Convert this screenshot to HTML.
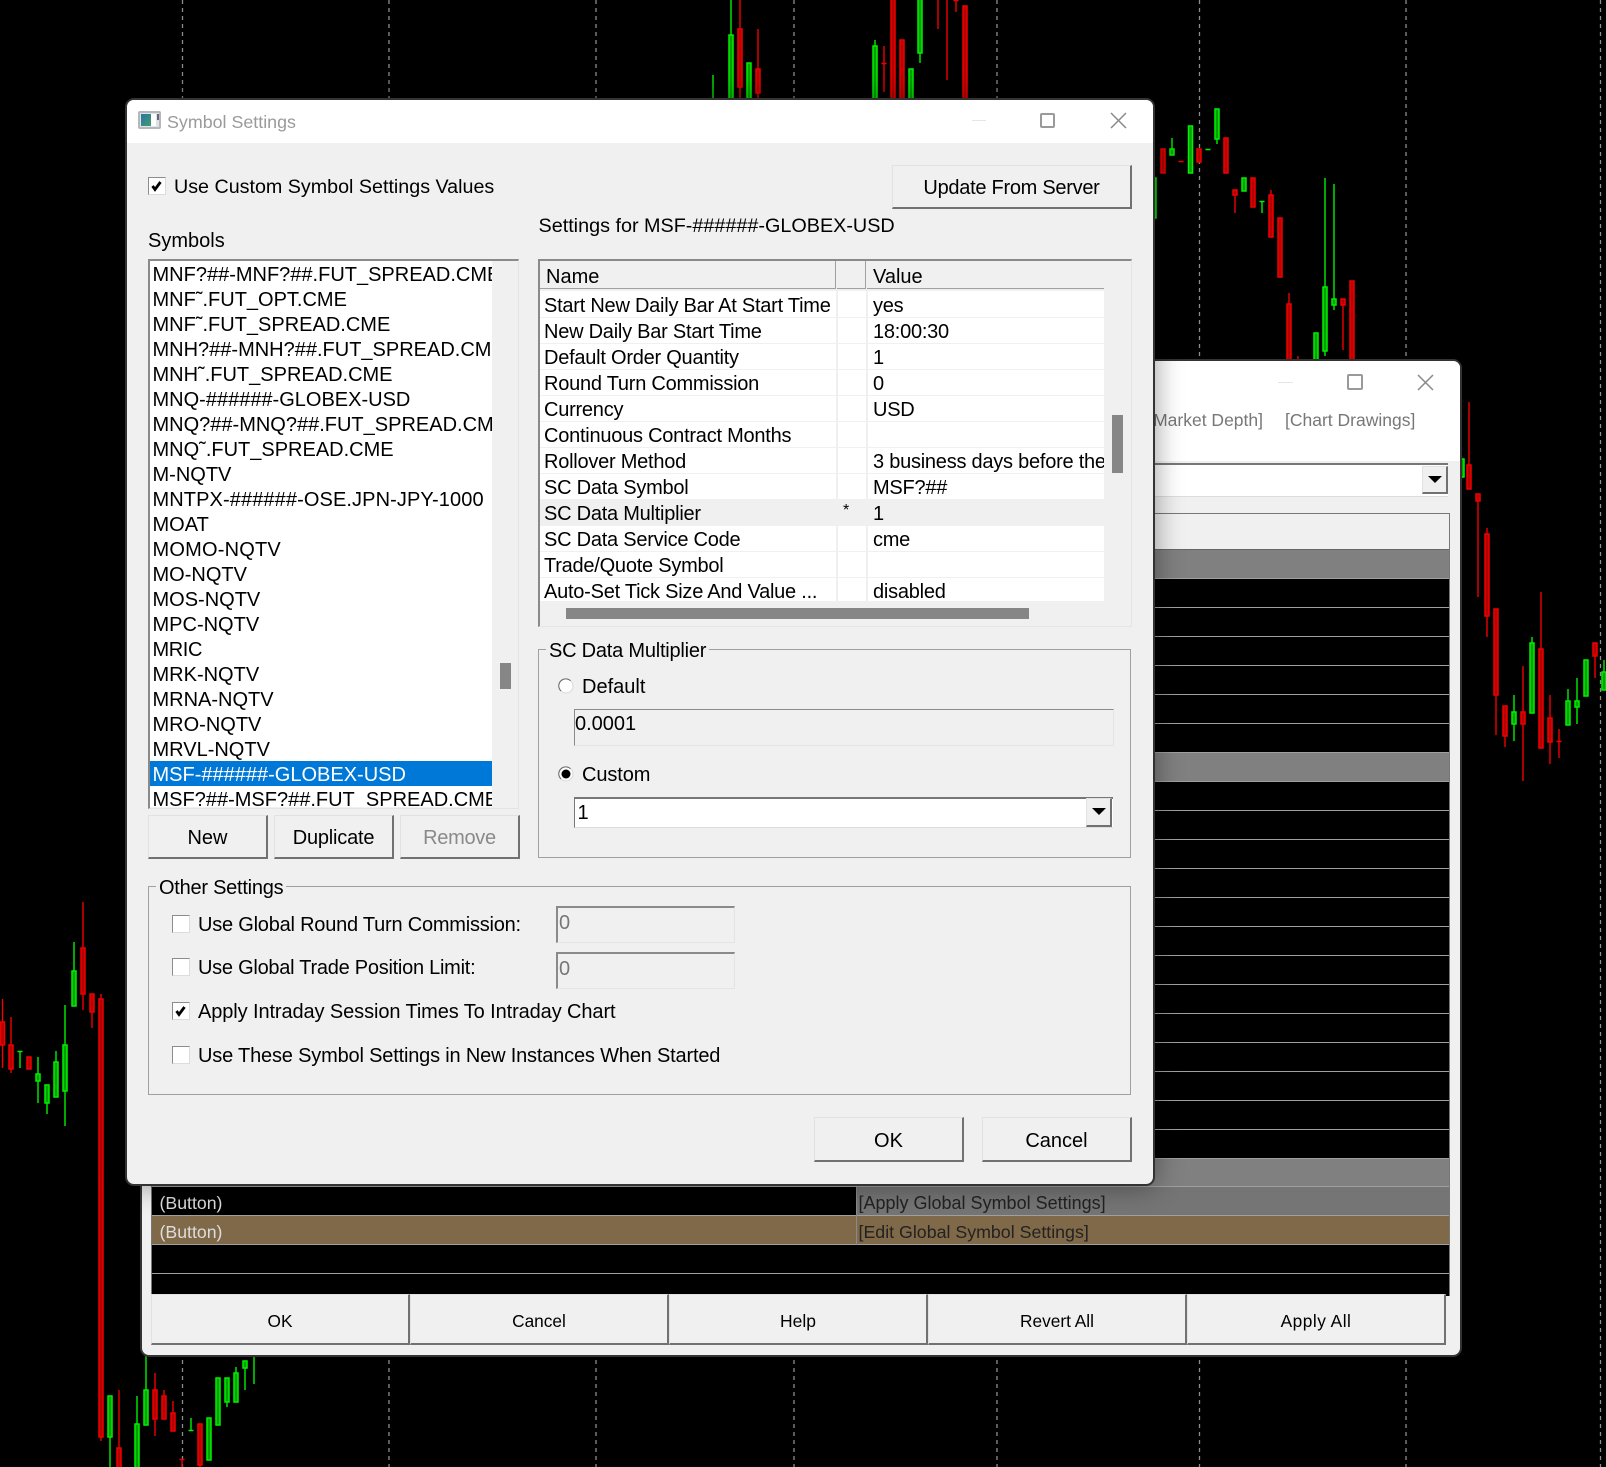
<!DOCTYPE html>
<html><head><meta charset="utf-8"><title>Symbol Settings</title>
<style>
html,body{margin:0;padding:0;background:#000}
body{position:relative;width:1606px;height:1467px;overflow:hidden;font-family:"Liberation Sans",Arial,sans-serif;font-size:20px;color:#000}
div,span,svg{position:absolute;box-sizing:border-box}
.t{white-space:nowrap;line-height:24px;height:24px}
.win{background:#f0f0f0;border:2px solid #333}
.btn{background:#f0f0f0;border-style:solid;border-width:1px 2px 2px 1px;border-color:#e2e2e2 #717171 #717171 #e2e2e2;text-align:center;white-space:nowrap}
.group{border:1px solid #a0a0a0;box-shadow:inset 0 0 0 0 #fff}
.sunken{border-style:solid;border-width:2px 1px 1px 2px;border-color:#8a8a8a #e4e4e4 #e4e4e4 #8a8a8a}
.cb{width:18px;height:18px;background:#fff;border:1px solid #dcdcdc;border-top-color:#8c8c8c;border-left-color:#8c8c8c}
.rl{position:absolute;left:0;width:100%;height:25px;line-height:25px;padding-left:2.500px;white-space:nowrap}
.tr{left:0;width:564px;height:26px;border-bottom:1px solid #f0f0f0}
.tr span{line-height:25px;white-space:nowrap;top:0}
.tr .a{left:4px}.tr .b{left:333px}
.gl{left:0;width:1298px;height:1px;background:#a0a0a0}
</style></head><body>
<svg width="1606" height="1467" style="left:0;top:0">
<g stroke="#8c8c8c" stroke-width="1.3" stroke-dasharray="4 4" fill="none">
<path d="M182.500 0V1467M389 0V1467M596 0V1467M794 0V1467M997 0V1467M1199.500 0V1467M1406 0V1467M1600.500 0V1467"/>
</g>
<path fill="none" stroke="#00f000" stroke-width="1.4" d="M1154 218V223M1172 138V149M1205.500 149.500h5M1217 139V144M1259.500 201.500h5M1262 201V213M1325 178V356M1334 184V310M713 75V100M731 0V35M875 40V46M920 53V63M1514 695V741M1532 637V643M1568 689V701M1577 678V724M1604 660V672M17.500 1051.500h5M20 1051V1068M38 1057V1103M47 1103V1114M56 1051V1062M65 1005V1126M74 942V971M110 1437V1467M137 1396V1424M146 1355V1390M188.500 1430.500h5M191 1418V1430M227 1402V1407M236 1367V1373M245 1368V1390M251.500 1355.500h5M254 1355V1384"/>
<path fill="#00a000" stroke="#00f000" stroke-width="1.500" d="M1152 178h4v40h-4zM1170 149h4v6h-4zM1188.500 126h4v47h-4zM1215 109h4v30h-4zM1242 178h4v13h-4zM1314 333h4v30h-4zM1323 287h4v64h-4zM1332 299h4v6h-4zM729 35h4v70h-4zM747 63h4v40h-4zM873 46h4v60h-4zM909 69h4v40h-4zM918 -2h4v55h-4zM1460 459h4v18h-4zM1512 712h4v12h-4zM1530 643h4v70h-4zM1566 701h4v24h-4zM1575 701h4v6h-4zM1584 660h4v36h-4zM1602 672h4v18h-4zM36 1074h4v7h-4zM45 1085h4v18h-4zM54 1062h4v35h-4zM63 1045h4v46h-4zM72 971h4v35h-4zM108 1396h4v41h-4zM135 1424h4v46h-4zM144 1390h4v35h-4zM207 1418h4v42h-4zM216 1378h4v47h-4zM225 1378h4v24h-4zM234 1373h4v29h-4zM243 1361h4v7h-4z"/>
<path fill="none" stroke="#f00000" stroke-width="1.4" d="M1178.500 161.500h5M1235 195V213M1271 190V195M1289 293V304M1298 356V362M1343 305V350M740 0V100M758 29V98M884 46V92M881.500 63.500h5M893 99V100M938 0V29M947 0V80M956 0V12M953.500 0.500h5M1469 402V465M1478 501V597M1487 528V534M1487 616V637M1496 695V735M1505 736V747M1523 666V781M1541 592V649M1550 695V764M1559 729V758M1556.500 741.500h5M1595 656V678M2.500 999V1068M11 1017V1073M83 902V1010M92 1012V1028M101 994V1441M119 1390V1448M155 1373V1436M164 1390V1396M173 1401V1413M179.500 1459.500h5M182 1459V1467M200 1465V1467"/>
<path fill="#b40000" stroke="#f00000" stroke-width="1.500" d="M1161 149h4v24h-4zM1197 149h4v13h-4zM1224 138h4v35h-4zM1233 190h4v5h-4zM1251 178h4v29h-4zM1269 195h4v42h-4zM1278 218h4v59h-4zM1287 304h4v60h-4zM1341 299h4v6h-4zM1350 281h4v83h-4zM738 29h4v58h-4zM756 69h4v24h-4zM891 -2h4v101h-4zM900 40h4v65h-4zM963 6h4v99h-4zM1467 465h4v24h-4zM1476 494h4v7h-4zM1485 534h4v82h-4zM1494 609h4v86h-4zM1503 706h4v30h-4zM1521 712h4v12h-4zM1539 649h4v99h-4zM1548 718h4v24h-4zM1593 643h4v13h-4zM0.500 1022h4v23h-4zM9 1045h4v24h-4zM27 1057h4v12h-4zM81 948h4v46h-4zM90 994h4v18h-4zM99 999h4v438h-4zM117 1448h4v22h-4zM153 1390h4v29h-4zM162 1396h4v23h-4zM171 1413h4v18h-4zM198 1424h4v41h-4z"/>
</svg>

<!-- BACK WINDOW -->
<div class="win" style="left:140px;top:359px;width:1322px;height:998px;border-radius:9px;overflow:hidden">
  <div style="left:0;top:0;width:1318px;height:100px;background:#fff"></div>
  <span class="t" style="right:197px;top:47px;font-size:17.500px;color:#777">[Market Depth]</span>
  <span class="t" style="left:1143px;top:47px;font-size:17.500px;color:#777">[Chart Drawings]</span>
  <div style="left:1136px;top:20.500px;width:15px;height:1px;background:#e4e4e4"></div>
  <div style="left:1205px;top:13px;width:16px;height:16px;border:2px solid #9a9a9a;border-radius:2px"></div>
  <svg width="17" height="17" style="left:1275px;top:13px"><path d="M1 1L16 16M16 1L1 16" stroke="#8a8a8a" stroke-width="1.500" fill="none"/></svg>
  <!-- combo -->
  <div style="left:10px;top:102px;width:1296px;height:34px;background:#fff;border-top:2px solid #777;border-bottom:1px solid #ddd"></div>
  <div class="btn" style="left:1280px;top:105px;width:26px;height:28px"></div>
  <svg width="14" height="8" style="left:1286px;top:115px"><path d="M0 0H14L7 7Z" fill="#000"/></svg>
  <!-- grid -->
  <div style="left:8.500px;top:152px;width:1299px;height:783px;background:#000;border:1px solid #777;border-bottom:0;overflow:hidden">
    <div style="left:0;top:0;width:1298px;height:35px;background:#f0f0f0"></div>
    <div style="left:0;top:35px;width:1298px;height:30px;background:#808080;border-top:1px solid #666"></div>
    <div style="left:0;top:238px;width:1298px;height:29px;background:#808080"></div>
    <div style="left:0;top:644px;width:1298px;height:29px;background:#808080"></div>
    <div class="gl" style="top:64px"></div><div class="gl" style="top:93px"></div><div class="gl" style="top:122px"></div><div class="gl" style="top:151px"></div><div class="gl" style="top:180px"></div><div class="gl" style="top:209px"></div><div class="gl" style="top:238px"></div><div class="gl" style="top:267px"></div><div class="gl" style="top:296px"></div><div class="gl" style="top:325px"></div><div class="gl" style="top:354px"></div><div class="gl" style="top:383px"></div><div class="gl" style="top:412px"></div><div class="gl" style="top:441px"></div><div class="gl" style="top:470px"></div><div class="gl" style="top:499px"></div><div class="gl" style="top:528px"></div><div class="gl" style="top:557px"></div><div class="gl" style="top:586px"></div><div class="gl" style="top:615px"></div><div class="gl" style="top:644px"></div>
    <div style="left:704px;top:673px;width:594px;height:29px;background:#757575"></div>
    <div style="left:0;top:702px;width:1298px;height:29px;background:#7f6948"></div>
    <div class="gl" style="top:672px"></div><div class="gl" style="top:701px"></div><div class="gl" style="top:730px"></div><div class="gl" style="top:759px"></div>
    <div style="left:704px;top:673px;width:1.500px;height:58px;background:#8a8a8a"></div>
    <span class="t" style="left:8px;top:677px;font-size:17.700px;color:#ddd">(Button)</span>
    <span class="t" style="left:8px;top:706px;font-size:17.700px;color:#ddd">(Button)</span>
    <span class="t" style="left:707px;top:677px;font-size:18px;color:#222">[Apply Global Symbol Settings]</span>
    <span class="t" style="left:707px;top:706px;font-size:17.800px;color:#222">[Edit Global Symbol Settings]</span>
  </div>
  <!-- bottom buttons -->
  <div class="btn" style="left:9px;top:933px;width:259px;height:51px;font-size:17.300px;line-height:52px">OK</div>
  <div class="btn" style="left:268px;top:933px;width:259px;height:51px;font-size:17.300px;line-height:52px">Cancel</div>
  <div class="btn" style="left:527px;top:933px;width:259px;height:51px;font-size:17.500px;line-height:52px">Help</div>
  <div class="btn" style="left:786px;top:933px;width:259px;height:51px;font-size:17.300px;line-height:52px">Revert All</div>
  <div class="btn" style="left:1045px;top:933px;width:259px;height:51px;font-size:17.300px;line-height:52px;letter-spacing:.5px">Apply All</div>
</div>

<!-- MAIN DIALOG -->
<div class="win" style="left:125px;top:98px;width:1030px;height:1088px;border-radius:9px;overflow:hidden;z-index:1"></div>
<div style="left:125px;top:98px;width:1030px;height:1088px;border-radius:9px;box-shadow:0 0 28px rgba(0,0,0,.4);z-index:0"></div>
<div style="left:127px;top:100px;width:1026px;height:43px;background:#fff;border-radius:7px 7px 0 0;z-index:1"></div>

<div style="left:0;top:0;width:1606px;height:1467px;z-index:2">
  <!-- title -->
  <div style="left:138px;top:111px;width:23px;height:18px;background:#dfe3e6;border:2px solid #b4b8bc;border-radius:2px"></div>
  <div style="left:141px;top:114px;width:10px;height:12px;background:linear-gradient(135deg,#2b76a8,#3f9d6c)"></div>
  <div style="left:151px;top:114px;width:5px;height:12px;background:#fff"></div>
  <div style="left:157px;top:114px;width:2px;height:6px;background:#667"></div>
  <span class="t" style="left:167px;top:110px;font-size:17.850px;color:#9a9a9a">Symbol Settings</span>
  <div style="left:972px;top:120px;width:14px;height:1px;background:#e6e6e6"></div>
  <div style="left:1040px;top:113px;width:15px;height:15px;border:2px solid #9a9a9a;border-radius:2px"></div>
  <svg width="17" height="17" style="left:1110px;top:112px"><path d="M1 1L16 16M16 1L1 16" stroke="#8a8a8a" stroke-width="1.500" fill="none"/></svg>

  <!-- top row -->
  <div class="cb" style="left:148px;top:177px"></div>
  <svg width="12" height="12" style="left:151px;top:180px"><path d="M1.500 6L4 9.500L9.500 2" stroke="#000" stroke-width="2.800" fill="none"/></svg>
  <span class="t" style="left:174px;top:175px;font-size:19.700px">Use Custom Symbol Settings Values</span>
  <div class="btn" style="left:892px;top:165px;width:240px;height:44px;line-height:44px;font-size:20px;letter-spacing:-.28px">Update From Server</div>
  <span class="t" style="left:538.500px;top:214px;font-size:19.800px">Settings for MSF-######-GLOBEX-USD</span>
  <span class="t" style="left:148px;top:229px">Symbols</span>

  <!-- list -->
  <div class="sunken" style="left:148px;top:259px;width:371px;height:550px"></div>
  <div style="left:150px;top:261px;width:342px;height:546px;background:#fff;overflow:hidden">
    <div class="rl" style="top:1.500px">MNF?##-MNF?##.FUT_SPREAD.CME</div>
    <div class="rl" style="top:26.500px">MNF˜.FUT_OPT.CME</div>
    <div class="rl" style="top:51.500px">MNF˜.FUT_SPREAD.CME</div>
    <div class="rl" style="top:76.500px">MNH?##-MNH?##.FUT_SPREAD.CME</div>
    <div class="rl" style="top:101.500px">MNH˜.FUT_SPREAD.CME</div>
    <div class="rl" style="top:126.500px">MNQ-######-GLOBEX-USD</div>
    <div class="rl" style="top:151.500px">MNQ?##-MNQ?##.FUT_SPREAD.CME</div>
    <div class="rl" style="top:176.500px">MNQ˜.FUT_SPREAD.CME</div>
    <div class="rl" style="top:201.500px">M-NQTV</div>
    <div class="rl" style="top:226.500px;letter-spacing:.1px">MNTPX-######-OSE.JPN-JPY-1000</div>
    <div class="rl" style="top:251.500px">MOAT</div>
    <div class="rl" style="top:276.500px;letter-spacing:.2px">MOMO-NQTV</div>
    <div class="rl" style="top:301.500px">MO-NQTV</div>
    <div class="rl" style="top:326.500px">MOS-NQTV</div>
    <div class="rl" style="top:351.500px">MPC-NQTV</div>
    <div class="rl" style="top:376.500px;letter-spacing:-.4px">MRIC</div>
    <div class="rl" style="top:401.500px">MRK-NQTV</div>
    <div class="rl" style="top:426.500px">MRNA-NQTV</div>
    <div class="rl" style="top:451.500px">MRO-NQTV</div>
    <div class="rl" style="top:476.500px">MRVL-NQTV</div>
    <div style="left:0;top:500px;width:100%;height:25px;background:#0078d7"></div>
    <div class="rl" style="top:501.500px;color:#fff">MSF-######-GLOBEX-USD</div>
    <div class="rl" style="top:526.500px">MSF?##-MSF?##.FUT_SPREAD.CME</div>
  </div>
  <div style="left:500px;top:663px;width:11px;height:26px;background:#868686"></div>

  <div class="btn" style="left:148px;top:815px;width:120px;height:44px;line-height:44px">New</div>
  <div class="btn" style="left:274px;top:815px;width:120px;height:44px;line-height:44px;letter-spacing:-.2px">Duplicate</div>
  <div class="btn" style="left:400px;top:815px;width:120px;height:44px;line-height:44px;color:#8a8a8a;letter-spacing:-.3px">Remove</div>

  <!-- table -->
  <div class="sunken" style="left:538px;top:259px;width:594px;height:368px"></div>
  <div style="left:540px;top:261px;width:296px;height:28px;border-right:1.500px solid #a0a0a0;border-bottom:1.500px solid #a0a0a0"></div>
  <div style="left:837px;top:261px;width:29px;height:28px;border-right:1.500px solid #a0a0a0;border-bottom:1.500px solid #a0a0a0"></div>
  <div style="left:867px;top:261px;width:237px;height:28px;border-bottom:1.500px solid #a0a0a0"></div>
  <span class="t" style="left:546px;top:265px">Name</span>
  <span class="t" style="left:873px;top:265px">Value</span>
  <div style="left:540px;top:291px;width:564px;height:310px;background:#fff;overflow:hidden;letter-spacing:-.24px">
    <div class="tr" style="top:1px"><span class="a" style="top:1.500px">Start New Daily Bar At Start Time</span><span class="b" style="top:1.500px">yes</span></div>
    <div class="tr" style="top:27px"><span class="a" style="top:1.500px">New Daily Bar Start Time</span><span class="b" style="top:1.500px">18:00:30</span></div>
    <div class="tr" style="top:53px"><span class="a" style="top:1.500px">Default Order Quantity</span><span class="b" style="top:1.500px">1</span></div>
    <div class="tr" style="top:79px"><span class="a" style="top:1.500px">Round Turn Commission</span><span class="b" style="top:1.500px">0</span></div>
    <div class="tr" style="top:105px"><span class="a" style="top:1.500px">Currency</span><span class="b" style="top:1.500px">USD</span></div>
    <div class="tr" style="top:131px"><span class="a" style="top:1.500px">Continuous Contract Months</span></div>
    <div class="tr" style="top:157px"><span class="a" style="top:1.500px">Rollover Method</span><span class="b" style="top:1.500px">3 business days before the expiration</span></div>
    <div class="tr" style="top:183px"><span class="a" style="top:1.500px">SC Data Symbol</span><span class="b" style="top:1.500px">MSF?##</span></div>
    <div class="tr" style="top:209px;background:#f0f0f0"><span class="a" style="top:1.500px">SC Data Multiplier</span><span style="left:303px;top:-2px;line-height:25px;font-size:16px">*</span><span class="b" style="top:1.500px">1</span></div>
    <div class="tr" style="top:235px"><span class="a" style="top:1.500px">SC Data Service Code</span><span class="b" style="top:1.500px">cme</span></div>
    <div class="tr" style="top:261px"><span class="a" style="top:1.500px">Trade/Quote Symbol</span></div>
    <div class="tr" style="top:287px"><span class="a" style="top:1.500px">Auto-Set Tick Size And Value ...</span><span class="b" style="top:1.500px">disabled</span></div>
    <div style="left:296px;top:0;width:2px;height:310px;background:#f0f0f0"></div>
    <div style="left:326px;top:0;width:2px;height:310px;background:#f0f0f0"></div>
  </div>
  <div style="left:1112px;top:415px;width:11px;height:58px;background:#868686"></div>
  <div style="left:566px;top:608px;width:463px;height:11px;background:#868686"></div>

  <!-- SC Data Multiplier -->
  <div class="group" style="left:538px;top:649px;width:593px;height:209px"></div>
  <span class="t" style="left:546px;top:639px;background:#f0f0f0;padding:0 3px;letter-spacing:-.22px">SC Data Multiplier</span>
  <svg width="16" height="16" style="left:557.500px;top:678px"><circle cx="8" cy="8" r="7" fill="#fff" stroke="#d8d8d8"/><path d="M12.500 2.700A7 7 0 0 0 3 13" fill="none" stroke="#666" stroke-width="1"/></svg>
  <span class="t" style="left:582px;top:675px">Default</span>
  <div class="sunken" style="left:574px;top:709px;width:540px;height:37px;border-width:1px"></div>
  <span class="t" style="left:575px;top:712px">0.0001</span>
  <svg width="16" height="16" style="left:557.500px;top:766px"><circle cx="8" cy="8" r="7" fill="#fff" stroke="#d8d8d8"/><path d="M12.500 2.700A7 7 0 0 0 3 13" fill="none" stroke="#666" stroke-width="1"/><circle cx="8" cy="8" r="4.500" fill="#000"/></svg>
  <span class="t" style="left:582px;top:763px;letter-spacing:-.1px">Custom</span>
  <div style="left:574px;top:797px;width:539px;height:31px;background:#fff;border-style:solid;border-width:2px 0 1px 1.500px;border-color:#777 #ddd #ddd #777"></div>
  <span class="t" style="left:577.500px;top:801px">1</span>
  <div class="btn" style="left:1086px;top:798px;width:26px;height:29px"></div>
  <svg width="14" height="8" style="left:1092px;top:808px"><path d="M0 0H14L7 7Z" fill="#000"/></svg>

  <!-- Other Settings -->
  <div class="group" style="left:148px;top:886px;width:983px;height:209px"></div>
  <span class="t" style="left:156px;top:876px;background:#f0f0f0;padding:0 3px;letter-spacing:-.25px">Other Settings</span>
  <div class="cb" style="left:172px;top:915px"></div>
  <span class="t" style="left:198px;top:913px;letter-spacing:-.22px">Use Global Round Turn Commission:</span>
  <div class="sunken" style="left:556px;top:906px;width:179px;height:37px"></div>
  <span class="t" style="left:559px;top:911px;color:#777">0</span>
  <div class="cb" style="left:172px;top:958px"></div>
  <span class="t" style="left:198px;top:956px;letter-spacing:-.26px">Use Global Trade Position Limit:</span>
  <div class="sunken" style="left:556px;top:952px;width:179px;height:37px"></div>
  <span class="t" style="left:559px;top:957px;color:#777">0</span>
  <div class="cb" style="left:172px;top:1002px"></div>
  <svg width="12" height="12" style="left:175px;top:1005px"><path d="M1.500 6L4 9.500L9.500 2" stroke="#000" stroke-width="2.800" fill="none"/></svg>
  <span class="t" style="left:198px;top:1000px;letter-spacing:-.1px">Apply Intraday Session Times To Intraday Chart</span>
  <div class="cb" style="left:172px;top:1046px"></div>
  <span class="t" style="left:198px;top:1044px;letter-spacing:-.18px">Use These Symbol Settings in New Instances When Started</span>

  <div class="btn" style="left:814px;top:1117px;width:150px;height:45px;line-height:47px">OK</div>
  <div class="btn" style="left:982px;top:1117px;width:150px;height:45px;line-height:47px">Cancel</div>
</div>
</body></html>
